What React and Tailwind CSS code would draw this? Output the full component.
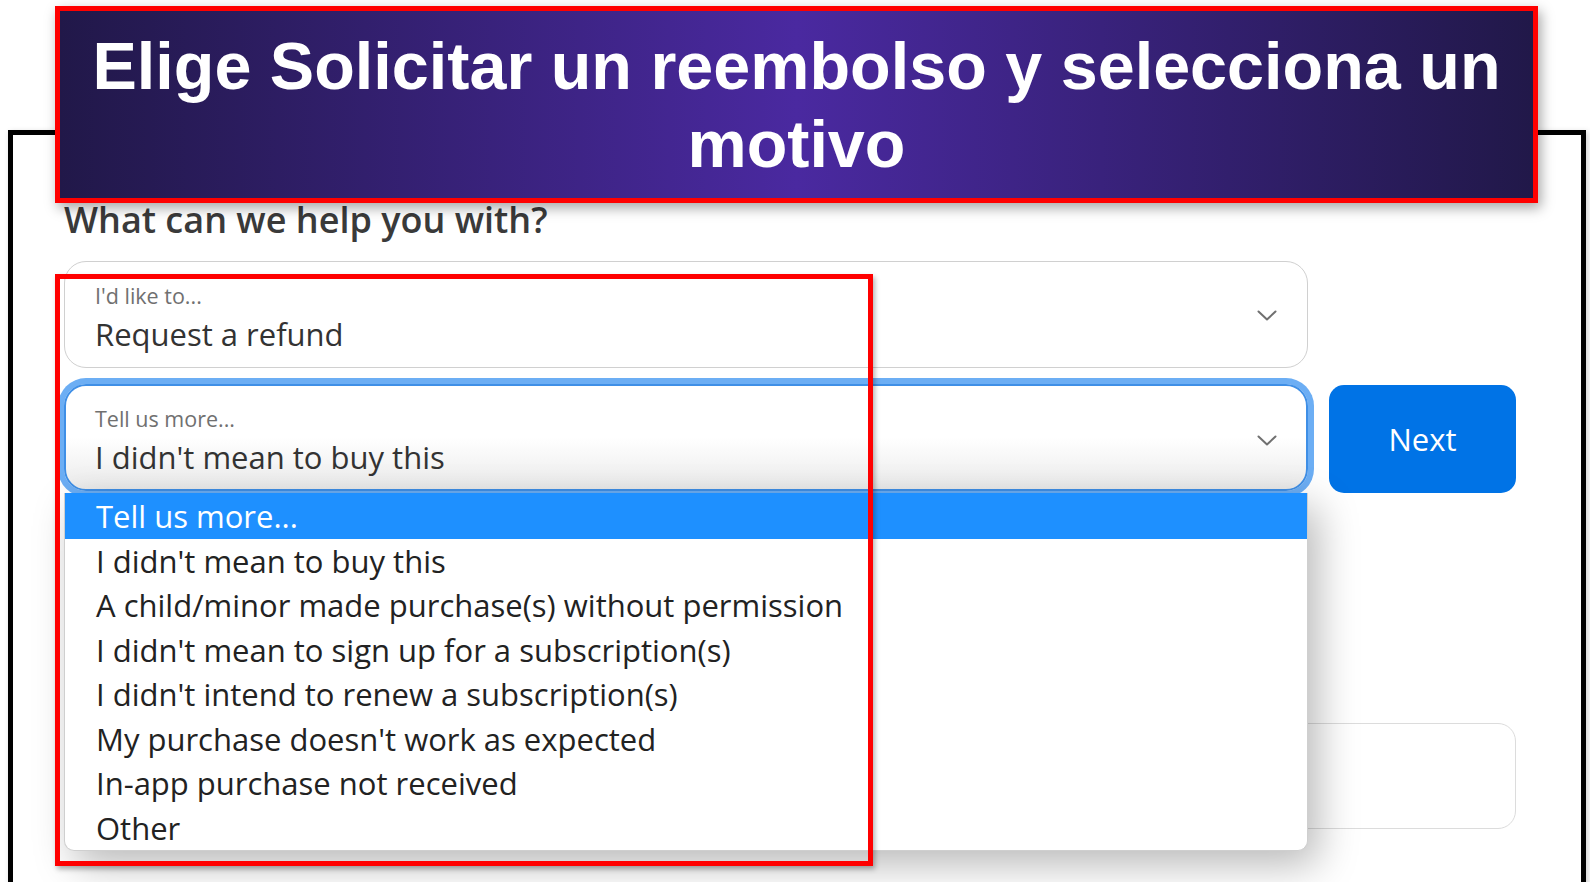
import React from "react";

const OPTIONS = [
  "Tell us more...",
  "I didn't mean to buy this",
  "A child/minor made purchase(s) without permission",
  "I didn't mean to sign up for a subscription(s)",
  "I didn't intend to renew a subscription(s)",
  "My purchase doesn't work as expected",
  "In-app purchase not received",
  "Other",
];

function Chevron({ className = "" }) {
  return (
    <svg width="20" height="11" viewBox="0 0 20 11" className={"shrink-0 " + className}>
      <polyline points="1.5,1.5 10,9.5 18.5,1.5" fill="none" stroke="#707070" strokeWidth="2" strokeLinecap="round" strokeLinejoin="round" />
    </svg>
  );
}

export default function App() {
  return (
    <div className="relative w-[1590px] h-[882px] overflow-hidden bg-white font-['Open_Sans',sans-serif]">
      {/* page frame */}
      <div className="ml-[8px] mt-[130px] w-[1578px] h-[760px] border-[5px] border-b-0 border-black pl-[51px] pt-[64px] shadow-[2px_2px_6px_rgba(0,0,0,0.2)]">
        <h1 className="text-[36px] leading-[42px] font-semibold text-[#3a3a3a]">What can we help you with?</h1>

        <div className="mt-[20px] w-[1244px] h-[107px] rounded-[22px] border border-[#d0d0d0] flex items-center pl-[30px] pr-[30px]">
          <div className="flex-1 pt-[7px]">
            <div className="text-[21.5px] leading-[26px] text-[#707070]">I'd like to...</div>
            <div className="mt-[6px] text-[31px] leading-[38px] text-[#333]">Request a refund</div>
          </div>
          <Chevron className="mt-[2px]" />
        </div>

        <div className="mt-[16px] flex items-start gap-[21px]">
          <div className="w-[1244px] h-[107px] rounded-[22px] border-2 border-[#3f8fe6] ring-[6px] ring-[#6caef4] bg-gradient-to-b from-white via-white to-[#ebebeb] flex items-center pl-[29px] pr-[29px]">
            <div className="flex-1 pt-[7px]">
              <div className="text-[21.5px] leading-[26px] text-[#707070]">Tell us more...</div>
              <div className="mt-[6px] text-[31px] leading-[38px] text-[#333]">I didn't mean to buy this</div>
            </div>
            <Chevron className="mt-[5px]" />
          </div>
          <button className="mt-[1px] w-[187px] h-[108px] rounded-[15px] bg-[#0073e6] text-white text-[31px] leading-none flex items-center justify-center">
            Next
          </button>
        </div>

        <div className="mt-[230px] w-[1452px] h-[106px] rounded-[18px] border border-[#dcdcdc]" />
      </div>

      {/* open dropdown list */}
      <ul className="absolute left-[64px] top-[493px] w-[1244px] h-[358px] bg-white rounded-b-[10px] border border-t-0 border-[#cfcfcf] shadow-[10px_14px_40px_rgba(0,0,0,0.28)] overflow-hidden">
        {OPTIONS.map((o, i) => (
          <li
            key={o}
            className={
              i === 0
                ? "h-[46px] flex items-center pl-[31px] bg-[#1e90ff] text-white text-[31px] leading-none"
                : "h-[44.5px] flex items-center pl-[31px] text-[#222] text-[31px] leading-none"
            }
          >
            {o}
          </li>
        ))}
      </ul>

      {/* annotation: highlight box */}
      <div className="absolute left-[55px] top-[274px] w-[818px] h-[592px] border-[5px] border-[#ff0000] shadow-[2px_3px_5px_rgba(0,0,0,0.3)]" />

      {/* annotation: title banner */}
      <div className="absolute left-[55px] top-[6px] w-[1483px] h-[197px] border-[5px] border-[#ff0000] bg-[linear-gradient(90deg,#211849_0%,#4a29a0_50%,#211849_100%)] shadow-[3px_5px_12px_rgba(0,0,0,0.35)] pt-[16px] px-[20px] text-center font-['Liberation_Sans',Arial,sans-serif] font-bold text-white text-[66.5px] leading-[78px]">
        Elige Solicitar un reembolso y selecciona un motivo
      </div>
    </div>
  );
}
